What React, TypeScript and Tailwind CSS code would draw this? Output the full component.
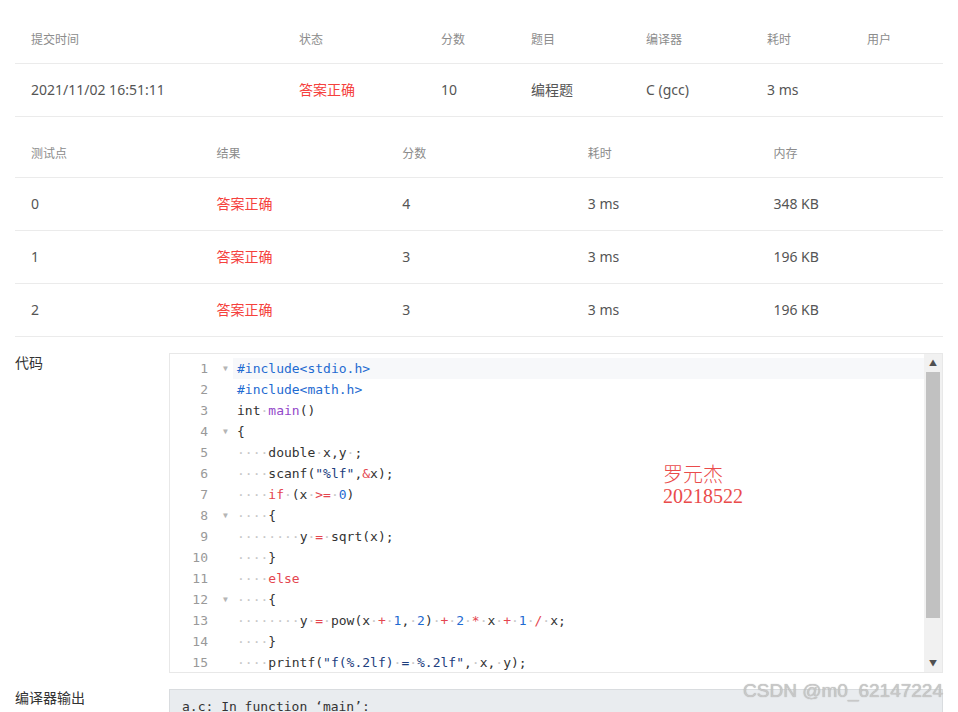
import React from "react";

type Seg = [string, string];

const D = "text-[#333333]";
const R = "text-[#e4464f]";
const B = "text-[#1f6bd1]";
const N = "text-[#1d3e7e]";
const P = "text-[#9347c9]";
const W = "text-[#c8c8c8]";

const sp = (n: number): Seg => [("·").repeat(n), W];

const lines: { segs: Seg[]; fold?: boolean }[] = [
  { segs: [["#include<stdio.h>", B]], fold: true },
  { segs: [["#include<math.h>", B]] },
  { segs: [["int", D], sp(1), ["main", P], ["()", D]] },
  { segs: [["{", D]], fold: true },
  { segs: [sp(4), ["double", D], sp(1), ["x,y", D], sp(1), [";", D]] },
  { segs: [sp(4), ["scanf(", D], ['"%lf"', N], [",", D], ["&", R], ["x);", D]] },
  { segs: [sp(4), ["if", R], sp(1), ["(x", D], sp(1), [">=", R], sp(1), ["0", B], [")", D]] },
  { segs: [sp(4), ["{", D]], fold: true },
  { segs: [sp(8), ["y", D], sp(1), ["=", R], sp(1), ["sqrt(x);", D]] },
  { segs: [sp(4), ["}", D]] },
  { segs: [sp(4), ["else", R]] },
  { segs: [sp(4), ["{", D]], fold: true },
  {
    segs: [
      sp(8), ["y", D], sp(1), ["=", R], sp(1), ["pow(x", D], sp(1), ["+", R], sp(1), ["1", B], [",", D], sp(1), ["2", B], [")", D],
      sp(1), ["+", R], sp(1), ["2", B], sp(1), ["*", R], sp(1), ["x", D], sp(1), ["+", R], sp(1), ["1", B], sp(1), ["/", R], sp(1), ["x;", D],
    ],
  },
  { segs: [sp(4), ["}", D]] },
  {
    segs: [
      sp(4), ["printf(", D], ['"f(%.2lf)', N], sp(1), ["=", N], sp(1), ['%.2lf"', N], [",", D], sp(1), ["x,", D], sp(1), ["y);", D],
    ],
  },
];

const ui = { fontFamily: '"Noto Sans", "Noto Sans CJK SC", sans-serif' };
const mono = { fontFamily: '"DejaVu Sans Mono", "Liberation Mono", monospace' };

function Table1() {
  const cols = "grid grid-cols-[268px_142px_90px_115px_121px_100px_92px]";
  const heads = ["提交时间", "状态", "分数", "题目", "编译器", "耗时", "用户"];
  return (
    <div>
      <div className={`${cols} h-[48px] items-center border-b border-[#ebebeb] text-[12px] text-[#8c8c8c]`}>
        {heads.map((h) => (
          <div key={h} className="pl-4 pt-[1px]">{h}</div>
        ))}
      </div>
      <div className={`${cols} h-[53px] items-center border-b border-[#ebebeb] text-[14px] text-[#555555]`}>
        <div className="pl-4 pb-[1px]">2021/11/02 16:51:11</div>
        <div className="pl-4 pb-[1px] text-[#f5413d]">答案正确</div>
        <div className="pl-4 pb-[1px]">10</div>
        <div className="pl-4 pb-[1px]">编程题</div>
        <div className="pl-4 pb-[1px]">C (gcc)</div>
        <div className="pl-4 pb-[1px]">3 ms</div>
        <div className="pl-4"></div>
      </div>
    </div>
  );
}

function Table2() {
  const heads = ["测试点", "结果", "分数", "耗时", "内存"];
  const rows = [
    ["0", "答案正确", "4", "3 ms", "348 KB"],
    ["1", "答案正确", "3", "3 ms", "196 KB"],
    ["2", "答案正确", "3", "3 ms", "196 KB"],
  ];
  return (
    <div className="mt-[13px]">
      <div className="grid grid-cols-5 h-[48px] items-center border-b border-[#ebebeb] text-[12px] text-[#8c8c8c]">
        {heads.map((h) => (
          <div key={h} className="pl-4 pt-[1px]">{h}</div>
        ))}
      </div>
      {rows.map((r) => (
        <div key={r[0]} className="grid grid-cols-5 h-[53px] items-center border-b border-[#ebebeb] text-[14px] text-[#555555]">
          {r.map((c, i) => (
            <div key={i} className={`pl-4 pb-[1px] ${i === 1 ? "text-[#f5413d]" : ""}`}>{c}</div>
          ))}
        </div>
      ))}
    </div>
  );
}

function Editor() {
  return (
    <div className="relative flex h-[320px] flex-1 overflow-hidden border border-[#e8e8e8] bg-white">
      <div className="flex-1 overflow-hidden pt-[4px]" style={mono}>
        {lines.map((l, i) => (
          <div key={i} className="flex h-[21px] items-center text-[13px] leading-[21px]">
            <div className="w-[38px] shrink-0 text-right text-[#999999]">{i + 1}</div>
            <div className="w-[25px] shrink-0 pl-[15px] text-[8px] text-[#b5b5b5]">{l.fold ? "▼" : ""}</div>
            <div className={`flex-1 whitespace-pre pl-[4px] ${i === 0 ? "bg-[#f7f8fa]" : ""}`}>
              {l.segs.map((s, j) => (
                <span key={j} className={s[1]}>{s[0]}</span>
              ))}
            </div>
          </div>
        ))}
      </div>
      <div className="flex w-[18px] shrink-0 flex-col bg-[#f1f1f1]">
        <div className="flex h-[18px] items-center justify-center text-[8px] leading-none text-[#505050]">▲</div>
        <div className="mx-[2px] h-[246px] bg-[#c1c1c1]"></div>
        <div className="flex-1"></div>
        <div className="flex h-[18px] items-center justify-center text-[8px] leading-none text-[#505050]">▼</div>
      </div>
      <div
        className="absolute left-[493px] top-[111px] text-[20px] leading-[21px] text-[#ea4b4b]"
        style={{ fontFamily: '"Liberation Serif", "Noto Sans CJK SC", serif', fontWeight: 300 }}
      >
        <div>罗元杰</div>
        <div>20218522</div>
      </div>
    </div>
  );
}

export default function App() {
  return (
    <div className="relative h-[712px] w-[958px] overflow-hidden bg-white px-[15px] pt-[16px]" style={ui}>
      <Table1 />
      <Table2 />
      <div className="mt-[16px] flex">
        <div className="w-[154px] shrink-0 text-[14px] leading-[20px] text-[#333333]">代码</div>
        <Editor />
      </div>
      <div className="mt-[16px] flex">
        <div className="w-[154px] shrink-0 text-[14px] leading-[18px] text-[#333333]">编译器输出</div>
        <div className="h-[100px] flex-1 border border-[#d9dcdf] bg-[#e9ecef] pl-[12px] pt-[7px] text-[13px] leading-[20px] text-[#333333]" style={mono}>
          a.c: In function ‘main’:
        </div>
      </div>
      <div
        className="absolute right-[15px] top-[679px] text-[19px] leading-[24px] text-[#c8c8c8]"
        style={{ fontFamily: '"Liberation Sans", sans-serif', textShadow: "0 0 1px rgba(120,120,120,0.6)" }}
      >
        CSDN @m0_62147224
      </div>
    </div>
  );
}
